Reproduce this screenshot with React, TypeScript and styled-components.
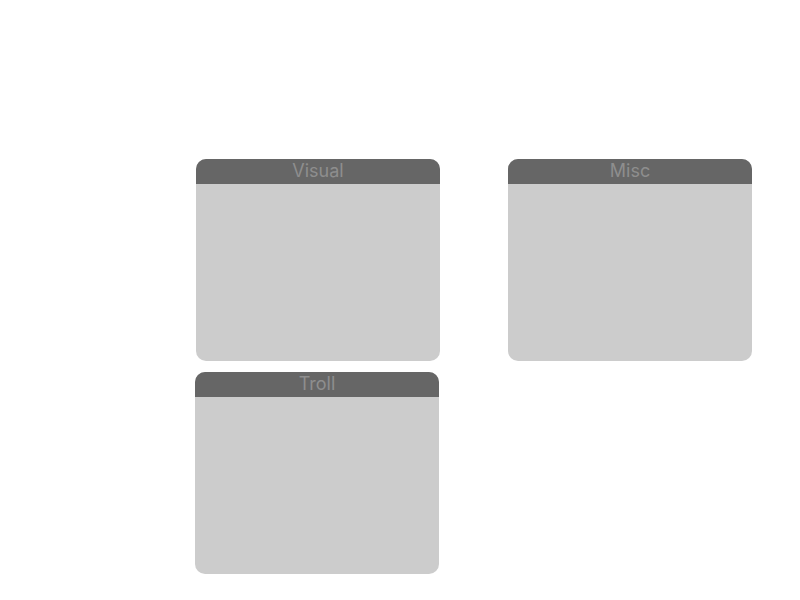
import styled, { createGlobalStyle } from "styled-components";

const Global = createGlobalStyle`
  html, body {
    margin: 0;
    padding: 0;
    background: #ffffff;
    font-family: Inter, "Noto Sans", sans-serif;
  }
`;

const Desktop = styled.div`
  position: relative;
  width: 800px;
  height: 600px;
  overflow: hidden;
`;

const Panel = styled.div<{ $x: number; $y: number }>`
  position: absolute;
  left: ${(p) => p.$x}px;
  top: ${(p) => p.$y}px;
  width: 244px;
  height: 202px;
  display: flex;
  flex-direction: column;
  background: #cccccc;
  border-radius: 10px;
  overflow: hidden;
`;

const Header = styled.div`
  height: 25px;
  box-sizing: border-box;
  padding-bottom: 2px;
  flex-shrink: 0;
  display: flex;
  align-items: center;
  justify-content: center;
  background: #666666;
  color: #8e8e8e;
  font-size: 18px;
  line-height: 1;
`;

const Body = styled.div`
  flex: 1;
`;

const panels = [
  { title: "Visual", x: 196, y: 159 },
  { title: "Misc", x: 508, y: 159 },
  { title: "Troll", x: 195, y: 372 },
];

export default function App() {
  return (
    <>
      <Global />
      <Desktop>
        {panels.map(({ title, x, y }) => (
          <Panel key={title} $x={x} $y={y}>
            <Header>{title}</Header>
            <Body />
          </Panel>
        ))}
      </Desktop>
    </>
  );
}
